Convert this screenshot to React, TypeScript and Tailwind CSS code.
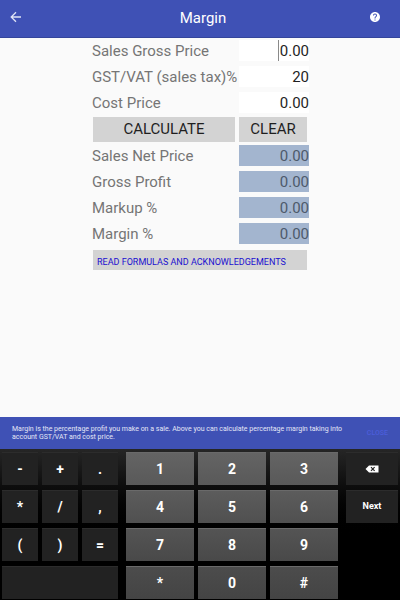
import {useState} from "react";

const symbolKeys = ["-", "+", ".", "*", "/", ",", "(", ")", "="];
const digitKeys = ["1", "2", "3", "4", "5", "6", "7", "8", "9", "*", "0", "#"];

const Header = () => {
    return (
        <header className="flex h-[38px] items-center border-b border-[#34459b] bg-[#3f51b5] text-white">
            <button aria-label="Back" className="flex h-full w-14 items-center pl-2.5 text-[#dfe3f6]">
                <svg viewBox="0 0 12 12" className="mb-1 h-3 w-3" fill="none" stroke="currentColor" strokeWidth="1.3">
                    <path d="M11 6H1.5M6 1.2L1.2 6L6 10.8"/>
                </svg>
            </button>
            <h1 className="flex-1 text-center text-[15px]">Margin</h1>
            <button aria-label="Help" className="flex h-full w-[50px] items-center justify-center">
                <svg viewBox="2 2 20 20" className="mb-1 h-[10px] w-[10px]" fill="currentColor">
                    <path d="M12 2C6.48 2 2 6.48 2 12s4.48 10 10 10 10-4.48 10-10S17.52 2 12 2zm1 17h-2v-2h2v2zm2.07-7.75l-.9.92C13.45 12.9 13 13.5 13 15h-2v-.5c0-1.1.45-2.1 1.17-2.83l1.24-1.26c.37-.36.59-.86.59-1.41 0-1.1-.9-2-2-2s-2 .9-2 2H8c0-2.21 1.79-4 4-4s4 1.79 4 4c0 .88-.36 1.68-.93 2.25z"/>
                </svg>
            </button>
        </header>
    );
};

type FieldProps = {
    id: string;
    label: string;
    value: string;
    cursor?: boolean;
    onChange?: (value: string) => void;
};

const Field = ({id, label, value, cursor, onChange}: FieldProps) => {
    return (
        <div className="grid grid-cols-[minmax(0,1fr)_70px] grid-rows-[21px] items-center gap-1 leading-[21px]">
            <label htmlFor={id} className="pt-0.5 pl-px whitespace-nowrap text-[#757575]">{label}</label>
            <div className="relative h-full">
                <input
                    id={id}
                    type="text"
                    inputMode="decimal"
                    value={value}
                    readOnly={!onChange}
                    onChange={e => onChange?.(e.target.value)}
                    className={`block h-full w-full text-right outline-none ${onChange ? "bg-white text-[#1f1f1f]" : "bg-[#a3b5cf] text-[#4e5a6b]"}`}
                />
                {cursor && <span className="absolute top-0 right-[30px] h-full w-px bg-[#8a8a8a]"/>}
            </div>
        </div>
    );
};

const Keyboard = () => {
    const darkKey = "h-[33px] border-t border-[#2c2c2c] bg-[#222222]";

    return (
        <div className="grid grid-cols-[116fr_212fr_52fr] gap-x-2 bg-linear-to-b from-[#262626] to-black to-60% px-0.5 pt-[3px] pb-px font-bold text-white">
            <div className="grid grid-cols-3 gap-x-1 gap-y-[5px] text-sm">
                {symbolKeys.map(key => (
                    <button key={key} className={darkKey}>{key}</button>
                ))}
                <button aria-label="Space" className={`col-span-3 ${darkKey}`}/>
            </div>
            <div className="grid grid-cols-3 gap-x-1 gap-y-[5px] text-sm">
                {digitKeys.map((key, i) => (
                    <button
                        key={key}
                        className={`h-[33px] border-t border-[#6a6a6a] bg-linear-to-b ${i < 3 ? "from-[#646464] to-[#595959]" : i < 6 ? "from-[#5c5c5c] to-[#505050]" : i < 9 ? "from-[#545454] to-[#494949]" : "from-[#4c4c4c] to-[#444444]"}`}
                    >
                        {key}
                    </button>
                ))}
            </div>
            <div className="flex flex-col gap-[5px] text-[9px]">
                <button aria-label="Delete" className={`flex items-center justify-center ${darkKey}`}>
                    <svg viewBox="0 0 14 8" className="h-2 w-3.5">
                        <path d="M4 .5H13.5V7.5H4L.5 4Z" fill="white"/>
                        <path d="M6 2.2L9.6 5.8M9.6 2.2L6 5.8" stroke="#222222" strokeWidth="1.2"/>
                    </svg>
                </button>
                <button className={darkKey}>Next</button>
            </div>
        </div>
    );
};

export default function App() {
    const [gross, setGross] = useState("0.00");
    const [tax, setTax] = useState("20");
    const [cost, setCost] = useState("0.00");
    const [results, setResults] = useState(["0.00", "0.00", "0.00", "0.00"]);

    function calculate() {
        const net = Number(gross) / (1 + Number(tax) / 100);
        const profit = net - Number(cost);
        const markup = Number(cost) ? profit / Number(cost) * 100 : 0;
        const margin = net ? profit / net * 100 : 0;
        setResults([net, profit, markup, margin].map(n => n.toFixed(2)));
    }

    function clear() {
        setGross("0.00");
        setTax("20");
        setCost("0.00");
        setResults(["0.00", "0.00", "0.00", "0.00"]);
    }

    return (
        <div className="flex min-h-screen flex-col bg-[#fafafa] font-[Roboto,sans-serif]">
            <Header/>
            <main className="mx-auto w-full max-w-[218px] flex-1 pt-0.5 text-[15px]">
                <div className="flex flex-col gap-[5px]">
                    <Field id="gross" label="Sales Gross Price" value={gross} onChange={setGross} cursor/>
                    <Field id="tax" label="GST/VAT (sales tax)%" value={tax} onChange={setTax}/>
                    <Field id="cost" label="Cost Price" value={cost} onChange={setCost}/>
                </div>
                <div className="mt-1 mb-[3px] flex gap-1 px-0.5 text-[#1f1f1f]">
                    <button className="h-[25px] flex-1 bg-[#d3d3d3]" onClick={calculate}>CALCULATE</button>
                    <button className="h-[25px] w-[68px] bg-[#d3d3d3]" onClick={clear}>CLEAR</button>
                </div>
                <div className="flex flex-col gap-[5px]">
                    <Field id="net" label="Sales Net Price" value={results[0]}/>
                    <Field id="profit" label="Gross Profit" value={results[1]}/>
                    <Field id="markup" label="Markup %" value={results[2]}/>
                    <Field id="margin" label="Margin %" value={results[3]}/>
                </div>
                <div className="mt-1.5 px-0.5">
                    <button className="block h-5 w-full bg-[#d3d3d3] pt-1 pl-1 text-left text-[9px] leading-4 whitespace-nowrap text-[#1a0fd0]">
                        READ FORMULAS AND ACKNOWLEDGEMENTS
                    </button>
                </div>
            </main>
            <div className="flex h-8 items-center justify-between bg-[#3f51b5] px-3 text-[7px] leading-2 text-[#e4e7f6]">
                <p className="max-w-[340px]">
                    Margin is the percentage profit you make on a sale. Above you can calculate percentage margin taking into account GST/VAT and cost price.
                </p>
                <button className="font-medium text-[#4c5edb]">CLOSE</button>
            </div>
            <Keyboard/>
        </div>
    );
}
